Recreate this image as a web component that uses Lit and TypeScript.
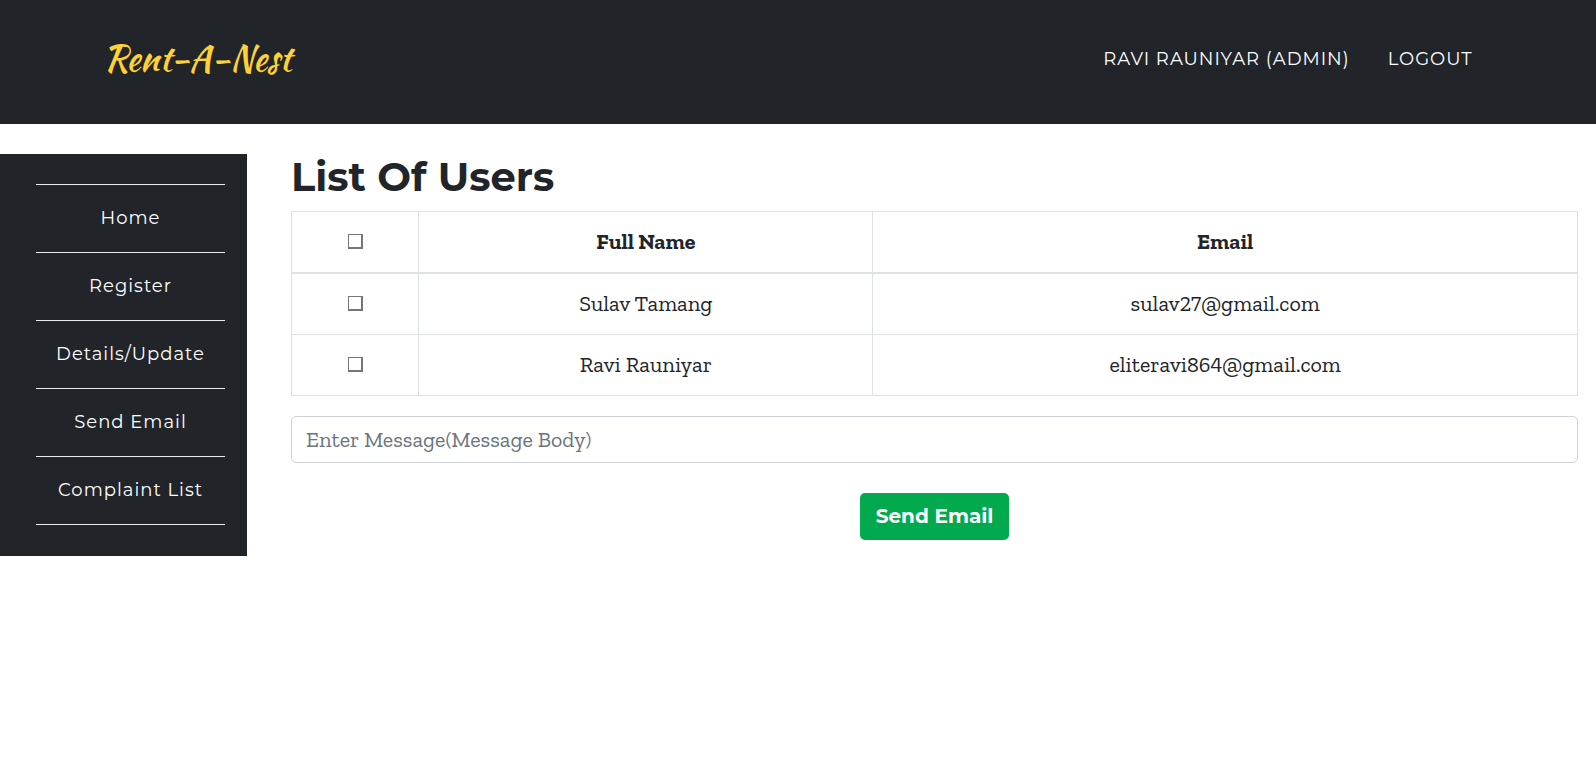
import { LitElement, html, css } from "lit";
import { customElement, state } from "lit/decorators.js";

interface User {
  name: string;
  email: string;
}

const LINKS = ["Home", "Register", "Details/Update", "Send Email", "Complaint List"];

const USERS: User[] = [
  { name: "Sulav Tamang", email: "sulav27@gmail.com" },
  { name: "Ravi Rauniyar", email: "eliteravi864@gmail.com" },
];

@customElement("app-root")
export class AppRoot extends LitElement {
  @state() private selected = new Set<string>();

  static styles = css`
    :host {
      --dark: #212529;
      --sans: "Montserrat", "Inter", sans-serif;
      --slab: "Zilla Slab", "Liberation Serif", serif;
      display: block;
      background: #fff;
      color: var(--dark);
      font-family: var(--slab);
      font-size: 22px;
      font-variant-numeric: lining-nums;
      line-height: 30px;
    }
    * {
      box-sizing: border-box;
    }
    a {
      color: #fff;
      text-decoration: none;
    }
    .header {
      background: var(--dark);
    }
    .bar {
      display: flex;
      align-items: center;
      justify-content: space-between;
      max-width: 1425px;
      margin: 0 auto;
      padding: 32px 38px 38px 18px;
    }
    .brand {
      color: #fed136;
      font-family: "Kaushan Script", "Lato", cursive;
      font-size: 35px;
      line-height: 54px;
    }
    .account {
      display: flex;
      gap: 38px;
      font-family: var(--sans);
      font-size: 18px;
      letter-spacing: 1px;
      text-transform: uppercase;
    }
    .body {
      display: flex;
      align-items: flex-start;
      padding-top: 30px;
    }
    .side {
      flex: none;
      width: 247px;
      padding: 30px 22px 31px 36px;
      background: var(--dark);
      font-family: var(--sans);
      font-size: 18px;
      line-height: 27px;
      letter-spacing: 1px;
      text-align: center;
    }
    .menu {
      list-style: none;
      margin: 0;
      padding: 0;
      border-top: 1px solid #e9ecef;
    }
    .item {
      border-bottom: 1px solid #e9ecef;
    }
    .link {
      display: block;
      padding: 20px 0;
    }
    .main {
      flex: 1;
      min-width: 0;
      padding: 0 18px 0 44px;
    }
    .title {
      margin: 0 0 11px;
      font-family: var(--sans);
      font-size: 40px;
      font-weight: 700;
      line-height: 46px;
    }
    .users {
      width: 100%;
      margin-bottom: 20px;
      border-collapse: collapse;
      table-layout: fixed;
      text-align: center;
    }
    .pick {
      width: 9.9%;
    }
    .name {
      width: 35.3%;
    }
    .users th,
    .users td {
      padding: 15px;
      border: 1px solid #dee2e6;
    }
    .users thead th {
      border-bottom-width: 2px;
    }
    .users .choose {
      padding: 14px 15px 16px;
    }
    .check {
      appearance: none;
      display: block;
      width: 15px;
      height: 15px;
      margin: 0 auto;
      border: 1px solid #767676;
      border-right-width: 2px;
      border-bottom-width: 2px;
      background: #fff;
    }
    .check:checked {
      background: #0075ff;
    }
    .message {
      display: block;
      width: 100%;
      padding: 7px 14px;
      border: 1px solid #ced4da;
      border-radius: 5px;
      color: #495057;
      font: inherit;
      line-height: 31px;
    }
    .message::placeholder {
      color: #6c757d;
      opacity: 1;
    }
    .send {
      display: block;
      margin: 30px auto 0;
      padding: 8px 16px;
      border: 0;
      border-radius: 5px;
      background: #02aa4d;
      color: #fff;
      font-family: var(--sans);
      font-size: 20px;
      font-weight: 700;
      line-height: 31px;
      cursor: pointer;
    }
  `;

  private toggle(email: string) {
    const next = new Set(this.selected);
    if (!next.delete(email)) next.add(email);
    this.selected = next;
  }

  private toggleAll() {
    const all = this.selected.size === USERS.length;
    this.selected = new Set(all ? [] : USERS.map((u) => u.email));
  }

  render() {
    return html`
      <header class="header">
        <div class="bar">
          <a class="brand" href="#">Rent-A-Nest</a>
          <nav class="account" aria-label="Account">
            <a href="#">Ravi Rauniyar (Admin)</a>
            <a href="#">Logout</a>
          </nav>
        </div>
      </header>
      <div class="body">
        <nav class="side" aria-label="Admin">
          <ul class="menu">
            ${LINKS.map((l) => html`<li class="item"><a class="link" href="#">${l}</a></li>`)}
          </ul>
        </nav>
        <main class="main">
          <h1 class="title">List Of Users</h1>
          <form @submit=${(e: Event) => e.preventDefault()}>
            <table class="users">
              <colgroup>
                <col class="pick" />
                <col class="name" />
                <col />
              </colgroup>
              <thead>
                <tr>
                  <th class="choose" scope="col">
                    <input
                      class="check"
                      type="checkbox"
                      aria-label="Select all users"
                      .checked=${this.selected.size === USERS.length}
                      @change=${this.toggleAll}
                    />
                  </th>
                  <th scope="col">Full Name</th>
                  <th scope="col">Email</th>
                </tr>
              </thead>
              <tbody>
                ${USERS.map(
                  (u) => html`<tr>
                    <td class="choose">
                      <input
                        class="check"
                        type="checkbox"
                        aria-label="Select ${u.name}"
                        .checked=${this.selected.has(u.email)}
                        @change=${() => this.toggle(u.email)}
                      />
                    </td>
                    <td>${u.name}</td>
                    <td>${u.email}</td>
                  </tr>`
                )}
              </tbody>
            </table>
            <input
              class="message"
              type="text"
              aria-label="Message body"
              placeholder="Enter Message(Message Body)"
            />
            <button class="send" type="submit">Send Email</button>
          </form>
        </main>
      </div>
    `;
  }
}
